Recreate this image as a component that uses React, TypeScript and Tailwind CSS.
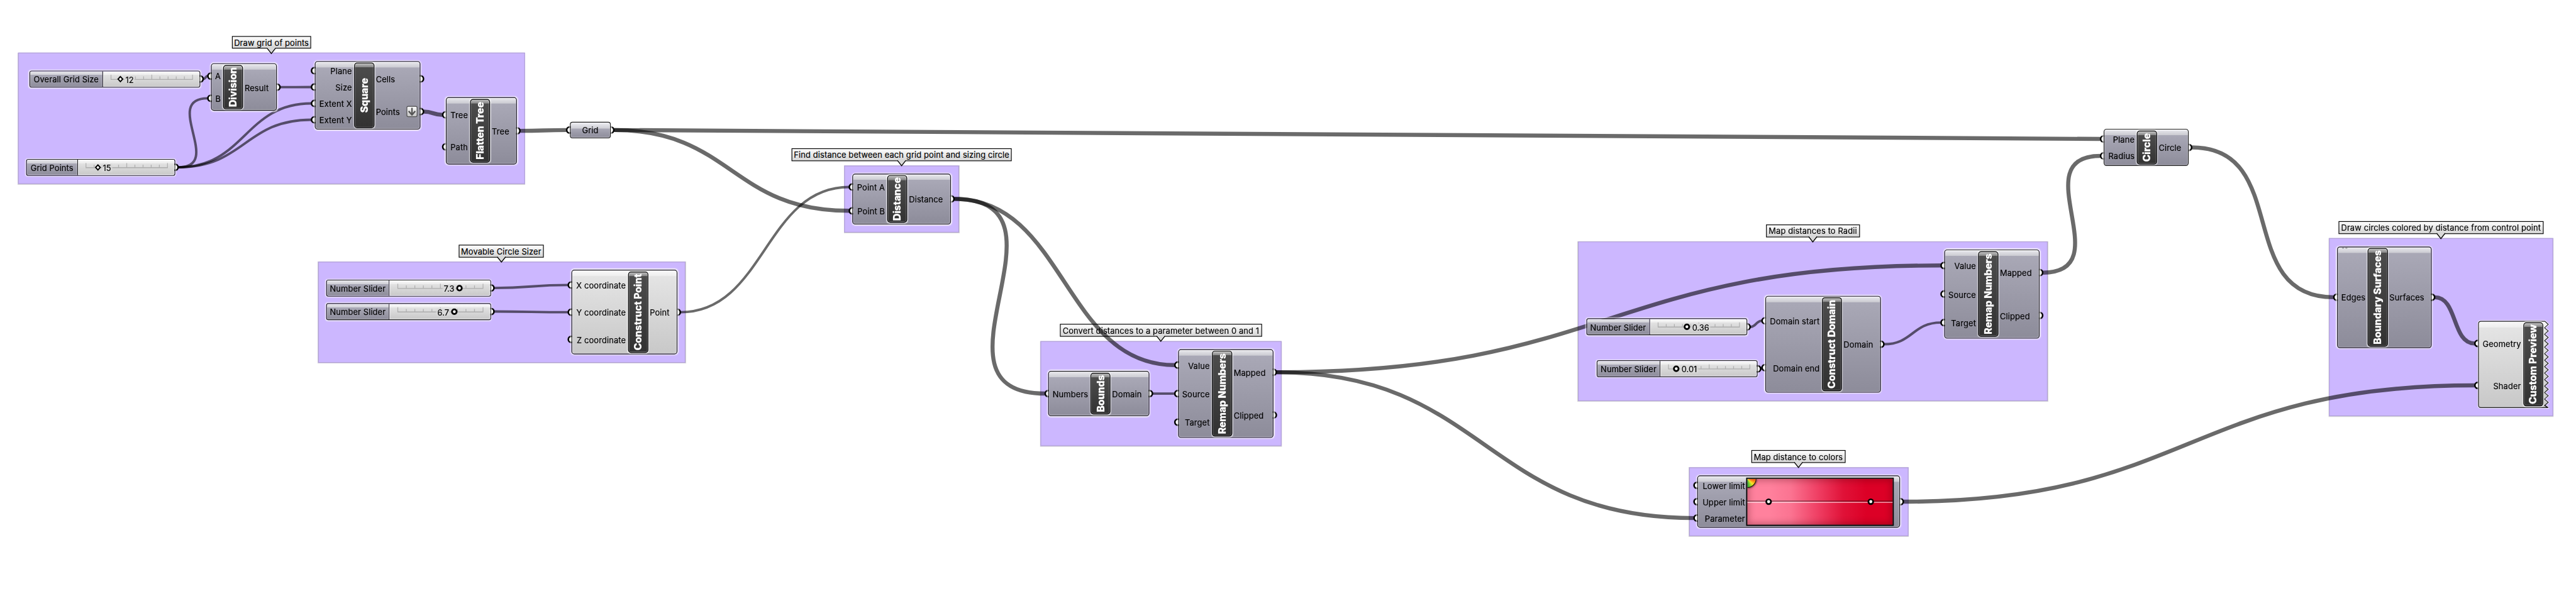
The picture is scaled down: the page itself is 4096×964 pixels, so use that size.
import React from "react";

const SCALE = 4096 / 6997;
const EDGE = 4.3;

type Box = { x: number; y: number; r: number; b: number };
type NodeDef = Box & {
  id: string;
  title?: string;
  titleX?: number;
  titleR?: number;
  ins: string[];
  outs: string[];
  light?: boolean;
  kind?: "plain" | "param" | "jagged" | "gradient";
  flatten?: boolean;
  remark?: boolean;
};
type SliderDef = Box & {
  id: string;
  label: string;
  split: number;
  tick0: number;
  tick1: number;
  knob: number;
  value: string;
  valueX: number;
  valueR: number;
  diamond?: boolean;
};
type GroupDef = Box & { label: string; lx: number; lr: number; ly: number; tip: number };

const groups: GroupDef[] = [
  { x: 49, y: 143, r: 1426, b: 499.5, label: "Draw grid of points", lx: 629.5, lr: 845, ly: 97.5, tip: 737.5 },
  { x: 863.5, y: 711, r: 1861.5, b: 985.5, label: "Movable Circle Sizer", lx: 1245.5, lr: 1477, ly: 665, tip: 1362.5 },
  { x: 2293, y: 449.5, r: 2605, b: 631.5, label: "Find distance between each grid point and sizing circle", lx: 2150, lr: 2748, ly: 403, tip: 2449 },
  { x: 2825.5, y: 926.7, r: 3480.5, b: 1212.5, label: "Convert distances to a parameter between 0 and 1", lx: 2878.5, lr: 3428, ly: 880.3, tip: 3153 },
  { x: 4286, y: 656, r: 5562, b: 1089.5, label: "Map distances to Radii", lx: 4796.5, lr: 5051.5, ly: 610, tip: 4924 },
  { x: 4588, y: 1270, r: 5183.5, b: 1456.5, label: "Map distance to colors", lx: 4757, lr: 5012.5, ly: 1223.3, tip: 4885.5 },
  { x: 6326, y: 647.3, r: 6934.5, b: 1130.7, label: "Draw circles colored by distance from control point", lx: 6352, lr: 6908.5, ly: 601, tip: 6630 },
];

const sliders: SliderDef[] = [
  { id: "size", label: "Overall Grid Size", x: 80, y: 191.5, r: 543.5, b: 237.5, split: 278.5, tick0: 300, tick1: 521.5, knob: 327, value: "12", valueX: 340, valueR: 362, diamond: true },
  { id: "pts", label: "Grid Points", x: 71, y: 431.5, r: 475.5, b: 477.5, split: 210.5, tick0: 232, tick1: 453.5, knob: 265.5, value: "15", valueX: 278, valueR: 301, diamond: true },
  { id: "sx", label: "Number Slider", x: 885.5, y: 759.5, r: 1333.5, b: 805.5, split: 1057, tick0: 1079.5, tick1: 1311, knob: 1247.5, value: "7.3", valueX: 1204, valueR: 1233 },
  { id: "sy", label: "Number Slider", x: 885.5, y: 823.5, r: 1333.5, b: 869.5, split: 1057, tick0: 1079.5, tick1: 1311, knob: 1234, value: "6.7", valueX: 1187, valueR: 1219 },
  { id: "ds", label: "Number Slider", x: 4308.5, y: 865.3, r: 4745.5, b: 911.3, split: 4480.7, tick0: 4502.5, tick1: 4723.5, knob: 4581.7, value: "0.36", valueX: 4595, valueR: 4642 },
  { id: "de", label: "Number Slider", x: 4337, y: 979.3, r: 4774, b: 1025.3, split: 4509, tick0: 4531, tick1: 4752, knob: 4553, value: "0.01", valueX: 4566, valueR: 4609 },
];

const nodes: NodeDef[] = [
  { id: "div", title: "Division", x: 573, y: 172.3, r: 752.2, b: 301.5, titleX: 605.8, titleR: 660, ins: ["A", "B"], outs: ["Result"] },
  { id: "sq", title: "Square", x: 854.5, y: 165.5, r: 1142, b: 352, titleX: 962, titleR: 1016.5, ins: ["Plane", "Size", "Extent X", "Extent Y"], outs: ["Cells", "Points"], flatten: true },
  { id: "flat", title: "Flatten Tree", x: 1210.8, y: 264.3, r: 1404, b: 446.7, titleX: 1277, titleR: 1331.5, ins: ["Tree", "Path"], outs: ["Tree"] },
  { id: "grid", x: 1547.5, y: 330.5, r: 1659, b: 376.2, ins: ["Grid"], outs: [""], kind: "param" },
  { id: "cp", title: "Construct Point", x: 1552, y: 733.3, r: 1839.5, b: 963.5, titleX: 1706, titleR: 1760.5, ins: ["X coordinate", "Y coordinate", "Z coordinate"], outs: ["Point"], light: true },
  { id: "dist", title: "Distance", x: 2315.3, y: 471.5, r: 2583, b: 609.5, titleX: 2409.6, titleR: 2464.3, ins: ["Point A", "Point B"], outs: ["Distance"] },
  { id: "bnd", title: "Bounds", x: 2847.3, y: 1008.3, r: 3122, b: 1130.7, titleX: 2961.8, titleR: 3016.3, ins: ["Numbers"], outs: ["Domain"] },
  { id: "rm1", title: "Remap Numbers", x: 3199.5, y: 949, r: 3458.5, b: 1190.3, titleX: 3292, titleR: 3346.5, ins: ["Value", "Source", "Target"], outs: ["Mapped", "Clipped"] },
  { id: "cd", title: "Construct Domain", x: 4794.5, y: 803.7, r: 5108.7, b: 1067, titleX: 4948.5, titleR: 5003, ins: ["Domain start", "Domain end"], outs: ["Domain"] },
  { id: "rm2", title: "Remap Numbers", x: 5280.7, y: 678.3, r: 5540, b: 919.7, titleX: 5373.3, titleR: 5427.7, ins: ["Value", "Source", "Target"], outs: ["Mapped", "Clipped"] },
  { id: "circ", title: "Circle", x: 5714, y: 350.3, r: 5944.7, b: 451, titleX: 5804, titleR: 5859, ins: ["Plane", "Radius"], outs: ["Circle"] },
  { id: "bs", title: "Boundary Surfaces", x: 6347.5, y: 669.5, r: 6604.7, b: 946, titleX: 6431.2, titleR: 6485.8, ins: ["Edges"], outs: ["Surfaces"], remark: true },
  { id: "prev", title: "Custom Preview", x: 6730.6, y: 872, r: 6921.7, b: 1108.6, titleX: 6853.7, titleR: 6908, ins: ["Geometry", "Shader"], outs: [], light: true, kind: "jagged" },
  { id: "grad", x: 4609.7, y: 1292.3, r: 5161.5, b: 1434.3, titleX: 4743, titleR: 5143.8, ins: ["Lower limit", "Upper limit", "Parameter"], outs: [""], kind: "gradient" },
];

const THIN = 6.6;
const THICK = 11;
// source id, output index, target id, input index, stroke width, optional handle length
const wires: [string, number, string, number, number, number?][] = [
  ["size", 0, "div", 0, THIN],
  ["pts", 0, "div", 1, THIN],
  ["div", 0, "sq", 1, THIN],
  ["pts", 0, "sq", 2, THIN],
  ["pts", 0, "sq", 3, THIN],
  ["sq", 1, "flat", 0, THICK],
  ["flat", 0, "grid", 0, THICK],
  ["grid", 0, "circ", 0, THICK],
  ["grid", 0, "dist", 1, THICK],
  ["sx", 0, "cp", 0, THIN],
  ["sy", 0, "cp", 1, THIN],
  ["cp", 0, "dist", 0, THIN],
  ["dist", 0, "rm1", 0, THICK],
  ["dist", 0, "bnd", 0, THICK],
  ["bnd", 0, "rm1", 1, THIN],
  ["rm1", 0, "rm2", 0, THICK],
  ["rm1", 0, "grad", 2, THICK],
  ["ds", 0, "cd", 0, THIN],
  ["de", 0, "cd", 1, THIN],
  ["cd", 0, "rm2", 2, THIN],
  ["rm2", 0, "circ", 1, THICK],
  ["circ", 0, "bs", 0, THICK],
  ["bs", 0, "prev", 0, THICK, 62],
  ["grad", 0, "prev", 1, THICK],
];

const portY = (n: Box, i: number, count: number) =>
  n.y + EDGE + ((n.b - n.y - 2 * EDGE) * (i + 0.5)) / count;

const place = (n: Box): React.CSSProperties => ({
  left: n.x,
  top: n.y,
  width: n.r - n.x,
  height: n.b - n.y,
});

function outPoint(id: string, i: number): [number, number] {
  const s = sliders.find((v) => v.id === id);
  if (s) return [s.r, portY(s, 0, 1)];
  const n = nodes.find((v) => v.id === id)!;
  return [n.r, portY(n, i, n.outs.length)];
}

function inPoint(id: string, i: number): [number, number] {
  const n = nodes.find((v) => v.id === id)!;
  return [n.x, portY(n, i, n.ins.length)];
}

function wirePath(from: [number, number], to: [number, number], handle?: number) {
  const x0 = from[0] + 9;
  const x1 = to[0] - 9;
  const c = handle ?? Math.max((x1 - x0) / 2, (Math.abs(to[1] - from[1]) * 2) / 3);
  return `M${x0} ${from[1]}C${x0 + c} ${from[1]} ${x1 - c} ${to[1]} ${x1} ${to[1]}`;
}

function Wires() {
  const ports: [number, number][] = [];
  sliders.forEach((s) => ports.push(outPoint(s.id, 0)));
  nodes.forEach((n) => {
    n.ins.forEach((_, i) => ports.push(inPoint(n.id, i)));
    n.outs.forEach((_, i) => ports.push(outPoint(n.id, i)));
  });
  return (
    <svg className="absolute inset-0" width="6997" height="1646" viewBox="0 0 6997 1646" fill="none">
      {wires.map(([a, i, b, j, w, handle], k) => (
        <path key={k} d={wirePath(outPoint(a, i), inPoint(b, j), handle)} stroke="#000" strokeOpacity="0.585" strokeWidth={w} />
      ))}
      {ports.map(([x, y], k) => (
        <circle key={k} cx={x} cy={y} r="8.3" fill="#fff" stroke="#000" strokeWidth="4.4" />
      ))}
    </svg>
  );
}

function Group({ g }: { g: GroupDef }) {
  return (
    <>
      <div className="absolute border-2 border-[#b2a2d6] bg-[#ccb7ff] shadow-[0_1px_1px_1px_rgba(0,0,0,0.16)]" style={place(g)} />
      <div
        className="absolute flex h-[34.5px] items-center justify-center border-[2.5px] border-black bg-linear-to-b from-[#fdfdfd] to-[#d5d5d5] whitespace-nowrap"
        style={{ left: g.lx, top: g.ly, width: g.lr - g.lx }}
      >
        <span className="relative top-px text-[22px] leading-none tracking-[0.22px]">{g.label}</span>
        <svg className="absolute top-[29px]" style={{ left: g.tip - g.lx - 14.5 }} width="24" height="19" viewBox="0 0 24 19">
          <path d="M1 0H23V2.2L12 16.2L1 2.2Z" fill="#d8d8d8" />
          <path d="M0.5 1.8L12 16.4L23.5 1.8" fill="none" stroke="#000" strokeWidth="2.3" />
        </svg>
      </div>
    </>
  );
}

function Knob({ diamond }: { diamond?: boolean }) {
  return (
    <svg width="20" height="20" viewBox="0 0 20 20">
      {diamond ? (
        <path d="M10 3.2L16.2 10L10 16.8L3.8 10Z" fill="#fff" stroke="#000" strokeWidth="3.4" />
      ) : (
        <circle cx="10" cy="10" r="6.3" fill="#fff" stroke="#000" strokeWidth="4.8" />
      )}
    </svg>
  );
}

function Slider({ s }: { s: SliderDef }) {
  const w = s.r - s.split;
  const t0 = s.tick0 - s.split;
  const step = (s.tick1 - s.tick0) / 10;
  return (
    <div
      className="absolute flex overflow-hidden rounded-[6px] border-2 border-[#222] shadow-[0_0_3px_1.5px_rgba(255,255,255,0.75)]"
      style={place(s)}
    >
      <div
        className="flex shrink-0 items-center justify-center bg-[linear-gradient(#e6e6ea,#cfcfd6_10px,#a9a8b6_10px,#8d8c9a)] shadow-[inset_0_0_0_2px_rgba(255,255,255,0.22)]"
        style={{ width: s.split - s.x - 3 }}
      >
        <span className="relative top-[1.5px] text-[22px] leading-none tracking-[0.2px] whitespace-nowrap">{s.label}</span>
      </div>
      <div className="w-[2px] shrink-0 bg-[#222]" />
      <div className="relative flex-1 bg-[linear-gradient(#fbfbfb,#ececec_10px,#e2e2e2_10px,#c8c8c8)] shadow-[inset_0_0_0_2px_rgba(255,255,255,0.45)]">
        <svg className="absolute top-0 left-0" width={w} height="42" viewBox={`0 0 ${w} 42`}>
          <path d={`M${t0 - 1} 21.7H${t0 + step * 10 + 1}`} stroke="#000" strokeOpacity="0.2" strokeWidth="2.2" />
          {Array.from({ length: 11 }, (_, i) => (
            <path key={i} d={`M${t0 + i * step} ${i % 5 ? 13.6 : 8.8}V20.6`} stroke="#000" strokeOpacity="0.2" strokeWidth="2.2" />
          ))}
        </svg>
        <div
          className="absolute top-[14px] flex h-[16px] items-center justify-center bg-[#dadada] shadow-[0_0_4px_2px_#dadada]"
          style={{ left: s.valueX - s.split, width: s.valueR - s.valueX }}
        >
          <span className="relative top-px text-[22px] leading-none whitespace-nowrap">{s.value}</span>
        </div>
        <div className="absolute top-[11.2px] h-[20px]" style={{ left: s.knob - s.split - 11 }}>
          <Knob diamond={s.diamond} />
        </div>
      </div>
    </div>
  );
}

function TitleBar({ text }: { text: string }) {
  return (
    <div className="flex h-full w-full items-center justify-center rounded-[8px] border-[2.6px] border-black bg-[linear-gradient(#c0c0c0,#848484_11px,#4c4c4c_11px,#323232)] shadow-[inset_0_0_0_1.5px_rgba(255,255,255,0.28),0_0_2px_1.5px_rgba(255,255,255,0.6)]">
      <span className="rotate-180 text-[26.8px] leading-none font-extrabold whitespace-nowrap text-white [writing-mode:vertical-rl]">
        {text}
      </span>
    </div>
  );
}

function GradientPanel() {
  return (
    <div className="relative h-full w-full border-[3px] border-black bg-[linear-gradient(90deg,#ff819d_0%,#ff819d_15%,#fb7391_30%,#ee3b60_50%,#e01238_66%,#dc0026_82%,#dc0026)]">
      <div className="absolute inset-0 shadow-[inset_0_0_18px_4px_rgba(60,0,10,0.32)]" />
      <svg className="absolute top-0 left-0" width="395" height="125" viewBox="0 0 395 125">
        <path d="M0 60.7H395" stroke="#000" strokeOpacity="0.4" strokeWidth="3" />
        <path d="M0 64H395" stroke="#fff" strokeOpacity="0.55" strokeWidth="3" />
        <circle cx="58" cy="62.3" r="6.5" fill="#fff" stroke="#000" strokeWidth="4.6" />
        <circle cx="335.5" cy="62.3" r="6.5" fill="#fff" stroke="#000" strokeWidth="4.6" />
      </svg>
      <div className="absolute top-0 left-0 h-[25px] w-[25px] rounded-br-full border-r-[2.5px] border-b-[2.5px] border-[#1c1c00] bg-[conic-gradient(from_90deg_at_0_0,#f03c10,#fb9a1c_25deg,#f5e628_45deg,#9ad62c_62deg,#22a83c_90deg)] shadow-[1px_1px_5px_rgba(0,0,0,0.6)]" />
    </div>
  );
}

function JaggedBody({ n }: { n: NodeDef }) {
  const w = n.r - n.x;
  const h = n.b - n.y;
  const inner = w - 10.5;
  const period = 17.63;
  let d = `M8 1H${inner + 1}`;
  for (let y = 1; y < h - 4; y += period) {
    d += `L${w - 0.5} ${Math.min(y + 8.6, h - 1)}`;
    if (y + period < h - 1) d += `L${inner} ${y + period}`;
  }
  d += `L${inner} ${h - 8}L${w - 4} ${h - 1}H8Q1 ${h - 1} 1 ${h - 8}V8Q1 1 8 1Z`;
  return (
    <svg className="absolute top-0 left-0 overflow-visible" width={w} height={h} viewBox={`0 0 ${w} ${h}`}>
      <defs>
        <linearGradient id="jag" x1="0" y1="0" x2="0" y2="1">
          <stop offset="0" stopColor="#fafafa" />
          <stop offset="0.072" stopColor="#ededed" />
          <stop offset="0.073" stopColor="#e4e4e4" />
          <stop offset="1" stopColor="#c8c8c8" />
        </linearGradient>
      </defs>
      <path d={d} fill="none" stroke="#fff" strokeOpacity="0.6" strokeWidth="6" />
      <path d={d} fill="url(#jag)" stroke="#222" strokeWidth="2" strokeLinejoin="miter" />
    </svg>
  );
}

const rowText = "relative top-[1.7px] text-[22px] leading-none tracking-[0.22px] whitespace-nowrap";

function GraphNode({ n }: { n: NodeDef }) {
  if (n.kind === "param") {
    return (
      <div
        className="absolute flex items-center justify-center rounded-[7px] border-2 border-[#222] bg-[linear-gradient(#f0f0f4,#cdcdd4_16px,#a9a8b6_16px,#8d8c9a)] shadow-[inset_0_0_0_2px_rgba(255,255,255,0.25),0_0_3px_1.5px_rgba(255,255,255,0.75)]"
        style={place(n)}
      >
        <span className={rowText}>{n.ins[0]}</span>
      </div>
    );
  }
  const skin = n.light
    ? "bg-[linear-gradient(#fafafa,#ededed_15px,#e4e4e4_15px,#c8c8c8)]"
    : "bg-[linear-gradient(#e9e9ed,#cbcbd2_15px,#a9a8b6_15px,#8d8c9a)]";
  return (
    <div className="absolute" style={place(n)}>
      {n.kind === "jagged" ? (
        <JaggedBody n={n} />
      ) : (
        <div
          className={
            "absolute inset-0 rounded-[8px] border-2 border-[#222] shadow-[inset_0_0_0_2px_rgba(255,255,255,0.25),inset_0_2px_0_rgba(255,255,255,0.6),0_0_3px_2px_rgba(255,255,255,0.75)] " +
            skin
          }
        />
      )}
      {n.remark && (
        <svg className="absolute top-[2px] left-[12px]" width="20" height="5" viewBox="0 0 20 5">
          <path d="M0 0H8.5Q4.2 7 0 0ZM9 0H17.5Q13.2 7 9 0Z" fill="#8f8f94" />
        </svg>
      )}
      <div className="absolute inset-0 flex py-[4.3px]">
        <div className="flex shrink-0 flex-col" style={{ width: n.titleX! - n.x }}>
          {n.ins.map((t) => (
            <div key={t} className={"flex flex-1 items-center justify-end " + (n.kind === "gradient" ? "pr-[3px]" : "pr-[6px]")}>
              <span className={rowText}>{t}</span>
            </div>
          ))}
        </div>
        <div className="shrink-0" style={{ width: n.titleR! - n.titleX! }}>
          {n.kind === "gradient" ? (
            <div className="h-[132.5px] pt-[1.5px]">
              <GradientPanel />
            </div>
          ) : (
            <TitleBar text={n.title!} />
          )}
        </div>
        <div className="flex flex-1 flex-col">
          {n.outs.map((t) => (
            <div key={t} className="flex flex-1 items-center justify-between pr-[8px] pl-[4.5px]">
              <span className={rowText}>{t}</span>
              {n.flatten && t === "Points" && (
                <span className="flex h-[30px] w-[30px] items-center justify-center rounded-[5px] border-2 border-[#555] bg-linear-to-b from-[#fafafa] to-[#c4c4c4]">
                  <svg className="shrink-0" width="24" height="24" viewBox="0 0 24 24" fill="none" stroke="#555" strokeWidth="4">
                    <path d="M12 2V20M3 11L12 21L21 11" />
                  </svg>
                </span>
              )}
            </div>
          ))}
        </div>
      </div>
    </div>
  );
}

export default function App() {
  return (
    <div className="relative h-[964px] w-[4096px] overflow-hidden bg-white">
      <div
        className="absolute top-0 left-0 h-[1646px] w-[6997px] origin-top-left font-['Inter','Liberation_Sans',sans-serif] text-black [-webkit-text-stroke:0.3px]"
        style={{ transform: `scale(${SCALE})` }}
      >
        {groups.map((g) => (
          <Group key={g.label} g={g} />
        ))}
        <Wires />
        {sliders.map((s) => (
          <Slider key={s.id} s={s} />
        ))}
        {nodes.map((n) => (
          <GraphNode key={n.id} n={n} />
        ))}
      </div>
    </div>
  );
}
